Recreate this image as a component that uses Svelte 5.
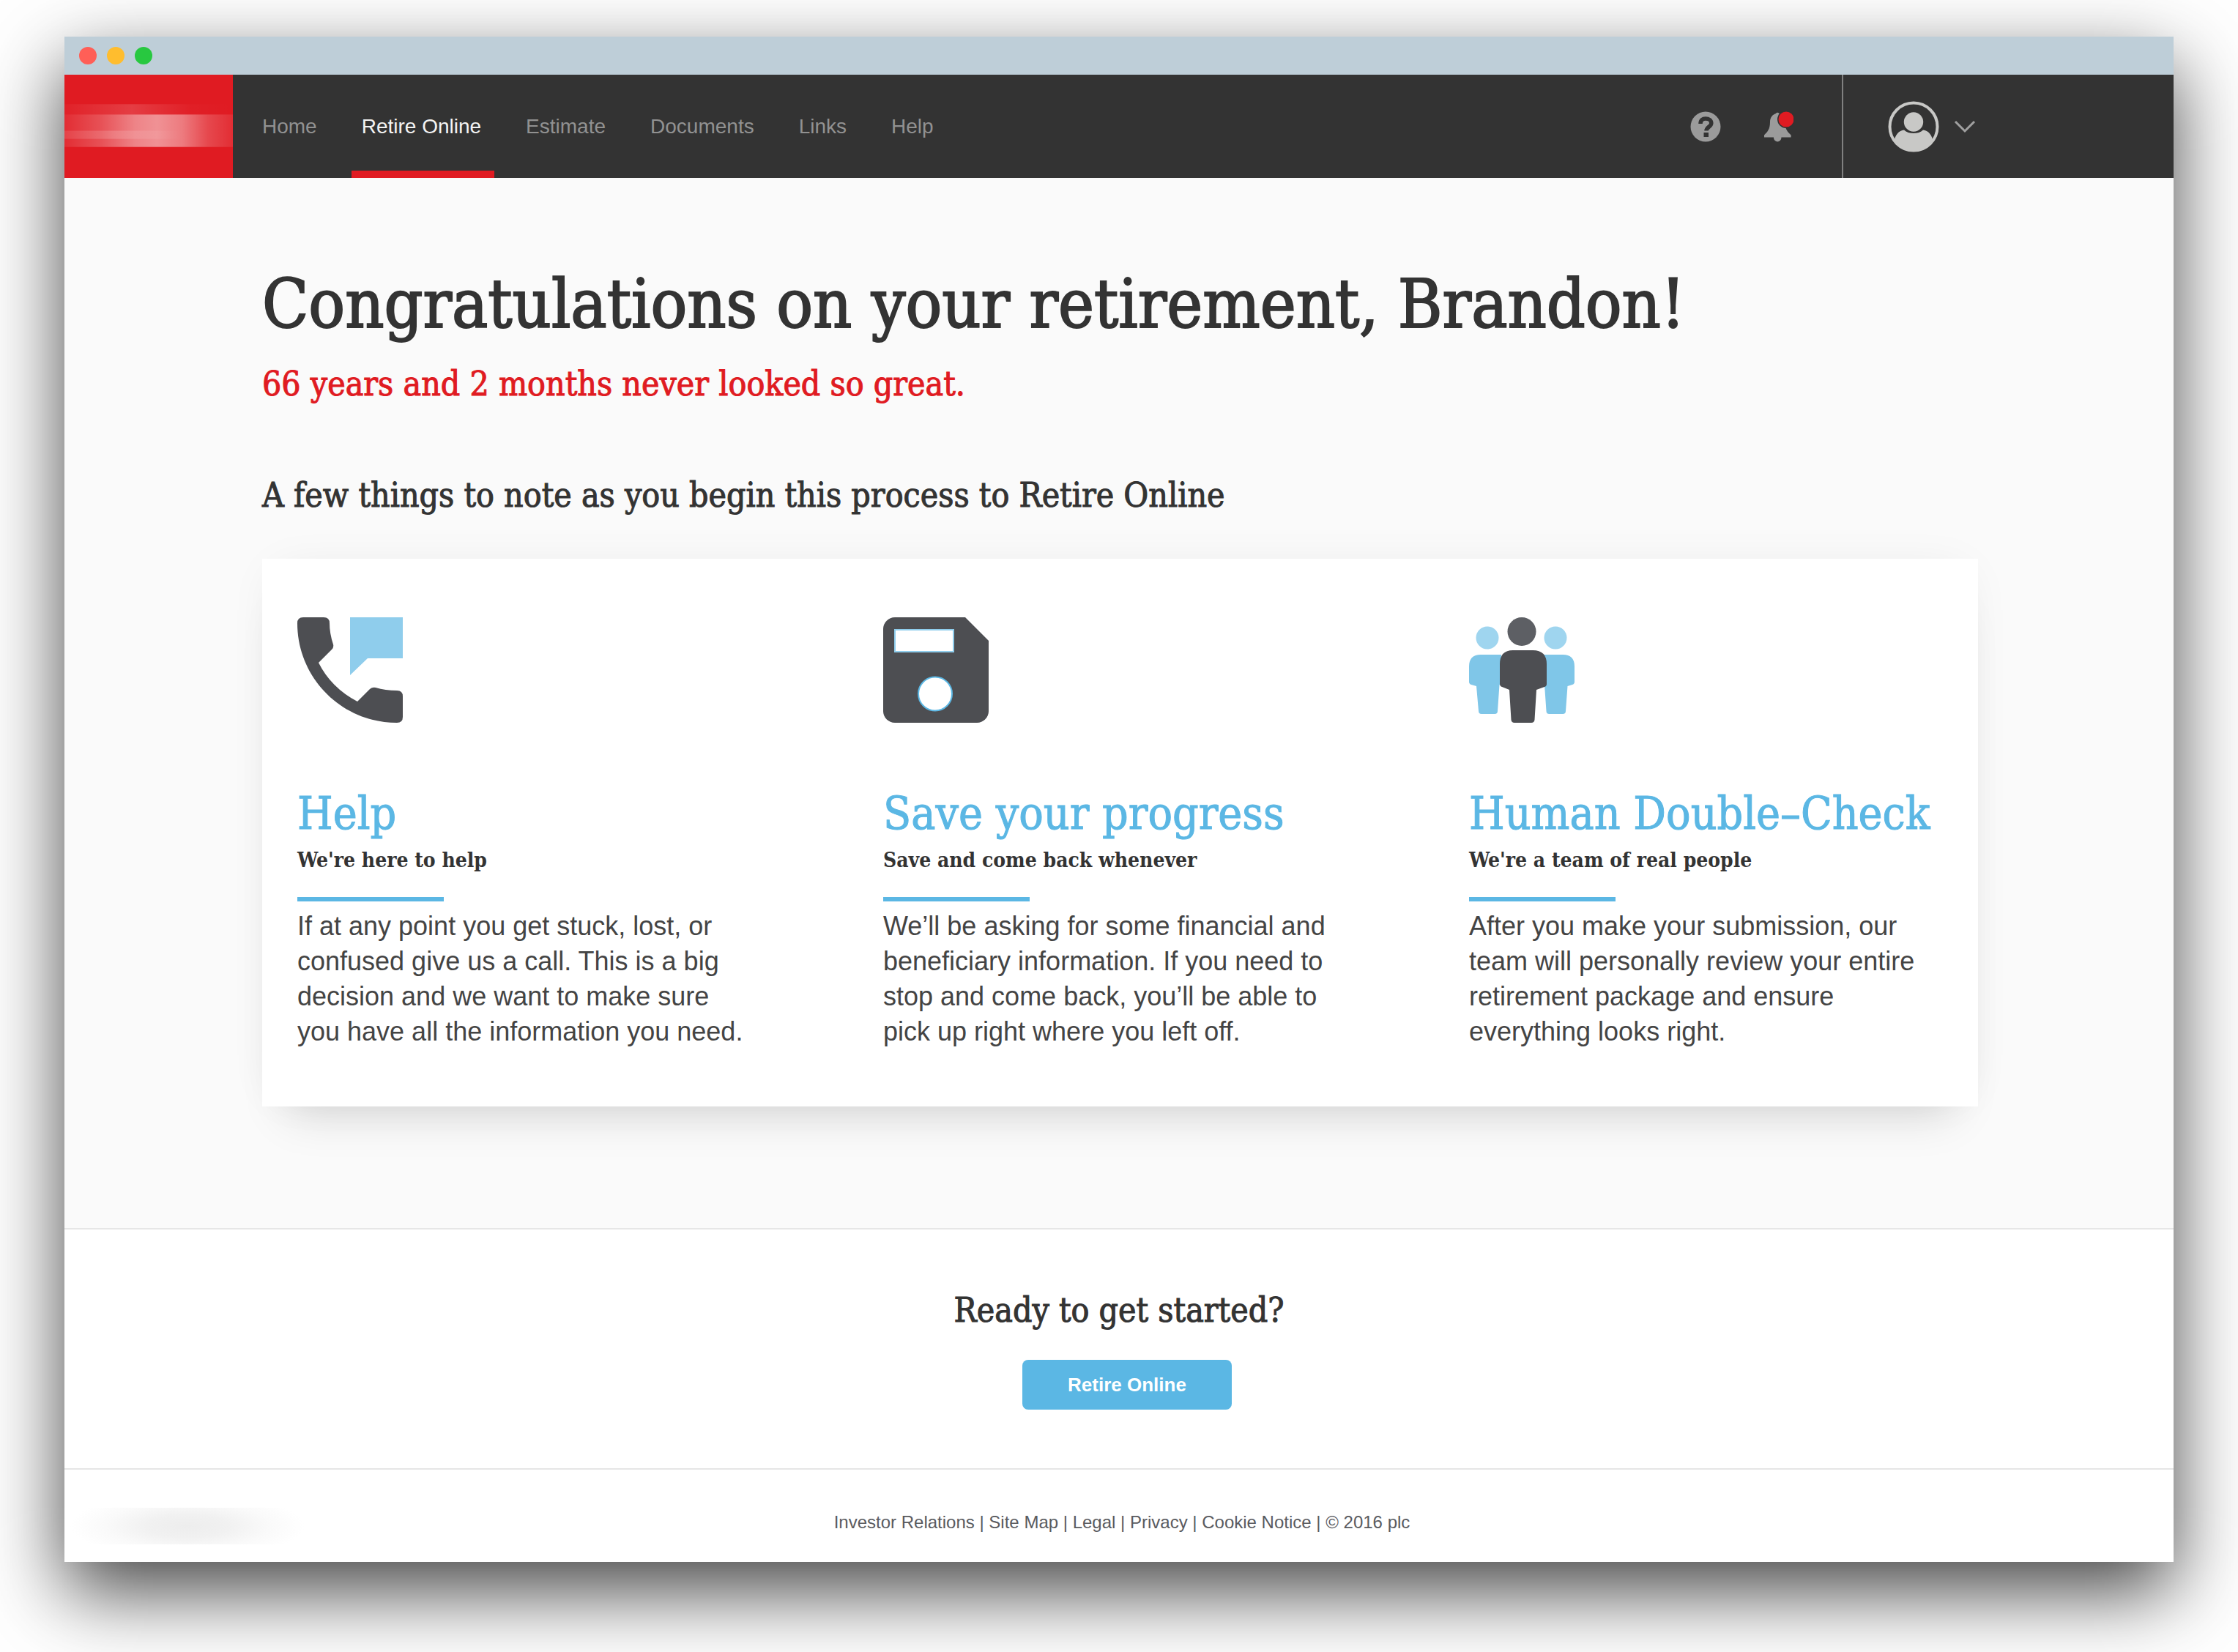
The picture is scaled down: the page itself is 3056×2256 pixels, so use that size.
<script>
  const nav = ['Home', 'Retire Online', 'Estimate', 'Documents', 'Links', 'Help'];
  const active = 'Retire Online';
  const cards = [
    {
      icon: 'phone',
      title: 'Help',
      sub: "We're here to help",
      text: 'If at any point you get stuck, lost, or confused give us a call. This is a big decision and we want to make sure you have all the information you need.'
    },
    {
      icon: 'save',
      title: 'Save your progress',
      sub: 'Save and come back whenever',
      text: 'We’ll be asking for some financial and beneficiary information. If you need to stop and come back, you’ll be able to pick up right where you left off.'
    },
    {
      icon: 'people',
      title: 'Human Double–Check',
      sub: "We're a team of real people",
      text: 'After you make your submission, our team will personally review your entire retirement package and ensure everything looks right.'
    }
  ];
  const links = ['Investor Relations', 'Site Map', 'Legal', 'Privacy', 'Cookie Notice'];
</script>

<div class="window">
  <div class="titlebar">
    <span class="light close"></span>
    <span class="light minimize"></span>
    <span class="light expand"></span>
  </div>

  <header>
    <a class="brand" href="#home" aria-label="Home page">
      <svg viewBox="0 0 230 140" preserveAspectRatio="none" aria-hidden="true">
        <defs>
          <linearGradient id="band">
            <stop offset="0" stop-color="#fff" stop-opacity="0.08" />
            <stop offset="0.22" stop-color="#fff" stop-opacity="0.24" />
            <stop offset="0.42" stop-color="#fff" stop-opacity="0.46" />
            <stop offset="0.55" stop-color="#fff" stop-opacity="0.52" />
            <stop offset="0.7" stop-color="#fff" stop-opacity="0.42" />
            <stop offset="0.85" stop-color="#fff" stop-opacity="0.2" />
            <stop offset="1" stop-color="#fff" stop-opacity="0.08" />
          </linearGradient>
          <linearGradient id="haze">
            <stop offset="0" stop-color="#fff" stop-opacity="0.03" />
            <stop offset="0.4" stop-color="#fff" stop-opacity="0.15" />
            <stop offset="0.75" stop-color="#fff" stop-opacity="0.02" />
            <stop offset="1" stop-color="#fff" stop-opacity="0" />
          </linearGradient>
          <linearGradient id="streak">
            <stop offset="0" stop-color="#fff" stop-opacity="0.1" />
            <stop offset="0.3" stop-color="#fff" stop-opacity="0.16" />
            <stop offset="0.7" stop-color="#fff" stop-opacity="0" />
          </linearGradient>
        </defs>
        <rect y="40" width="230" height="14" fill="url(#haze)" />
        <rect y="54" width="230" height="44" fill="url(#band)" />
        <rect y="76" width="230" height="11" fill="url(#streak)" />
      </svg>
    </a>
    <nav>
      {#each nav as item}
        <a href="#{item.toLowerCase().replace(' ', '-')}" class:active={item === active}>{item}</a>
      {/each}
    </nav>
    <div class="tools">
      <button class="icon" aria-label="Support">
        <svg width="42" height="42" viewBox="0 0 42 42" aria-hidden="true">
          <circle cx="21" cy="21" r="20.5" fill="#9b9b9b" />
          <path d="M14 17C14 12 17 10 21 10c4.500 0 7.800 2.300 7.800 6.200 0 4.800-6.800 5.300-6.800 10.300" fill="none" stroke="#333" stroke-width="5.500" />
          <rect x="18.500" y="29" width="6.500" height="6" fill="#333" />
        </svg>
      </button>
      <button class="icon" aria-label="Notifications">
        <svg width="42" height="42" viewBox="0 0 42 42" aria-hidden="true">
          <path d="M18 3a2.600 2.600 0 0 1 4.400 0c5 1.500 8 6 8 11.500 0 10 3.500 13.500 8.200 18V35.500H25.500a5.300 6 0 0 1-10.600 0H2V32.500c4.500-4.500 8-8 8-18 0-5.500 3-10 8-11.500z" fill="#9b9b9b" />
          <circle cx="32" cy="11" r="12" fill="#333" />
          <circle cx="32" cy="11" r="10.500" fill="#e01b22" />
        </svg>
      </button>
    </div>
    <button class="account" aria-label="Account menu">
      <svg width="70" height="70" viewBox="0 0 70 70" aria-hidden="true">
        <defs><clipPath id="face"><circle cx="35" cy="35" r="33" /></clipPath></defs>
        <circle cx="35" cy="35" r="32.500" fill="none" stroke="#c8c8c6" stroke-width="4" />
        <path clip-path="url(#face)" d="M8 70V56C10 46 15 40 22 39.500c3 3 8 4.500 13 4.500s10-1.500 13-4.500c7 .5 12 6.500 14 16.500V70z" fill="#c8c8c6" />
        <circle cx="35" cy="28.500" r="13.200" fill="#c8c8c6" />
      </svg>
      <svg width="30" height="18" viewBox="0 0 30 18" aria-hidden="true">
        <path d="M2 2l13 13L28 2" fill="none" stroke="#a0a0a0" stroke-width="3" />
      </svg>
    </button>
  </header>

  <main>
    <h1>Congratulations on your retirement, Brandon!</h1>
    <p class="age">66 years and 2 months never looked so great.</p>
    <h2>A few things to note as you begin this process to Retire Online</h2>

    <div class="cards">
      {#each cards as card}
        <section>
          <svg class="pic" viewBox="0 0 144 144" aria-hidden="true">
            {#if card.icon === 'phone'}
              <path d="M72 0H144V56H96L72 79z" fill="#8fcdec" />
              <path d="M8 0H36Q44 0 44 8 44 22 49 37 50 41 47 44L29 62Q46 96 82 115L99 98Q102 95 107 96 120 100 136 100 144 100 144 108V136Q144 144 136 144C61 144 0 83 0 8Q0 0 8 0z" fill="#4d4e52" />
            {:else if card.icon === 'save'}
              <path d="M16 0H112L144 32V128A16 16 0 0 1 128 144H16A16 16 0 0 1 0 128V16A16 16 0 0 1 16 0z" fill="#4d4e52" />
              <rect x="16" y="17" width="80" height="30" fill="#fff" stroke="#8fcdec" stroke-width="2" />
              <circle cx="71" cy="104.500" r="23" fill="#fff" stroke="#5bb7e4" stroke-width="2" />
            {:else}
              <g fill="#7fc6e8">
                <path d="M16 51H44V92L41.500 92 39 128Q39 132 35 132H17Q13 132 13 128L10 94 3 92Q0 91 0 88V67Q0 51 16 51z" />
                <path d="M128 51H100V92L103 92 105.500 128Q105.500 132 109.500 132H128Q132 132 132 128L134.500 94 141 92Q144 91 144 88V67Q144 51 128 51z" />
              </g>
              <circle cx="25" cy="28" r="15.500" fill="#9fd5ef" />
              <circle cx="118" cy="28" r="15.500" fill="#9fd5ef" />
              <circle cx="72" cy="19.500" r="19.500" fill="#5d5f64" />
              <path d="M60 45H87Q106 45 106 64V91Q106 94 103 95L92 99 89.500 140Q89 144 85 144H62Q58 144 57.500 140L55 99 45 95Q42 94 42 91V64Q42 45 60 45z" fill="#4d4e52" />
            {/if}
          </svg>
          <h3>{card.title}</h3>
          <h4>{card.sub}</h4>
          <p>{card.text}</p>
        </section>
      {/each}
    </div>
  </main>

  <div class="cta">
    <h2>Ready to get started?</h2>
    <button class="primary">Retire Online</button>
  </div>

  <footer>
    <span class="mark"></span>
    <div class="links">
      {#each links as link}<a href="#{link.toLowerCase().replace(' ', '-')}">{link}</a>{' | '}{/each}© 2016 plc
    </div>
  </footer>
</div>

<style>
  :global(body) {
    background: #fff;
  }
  .window {
    margin: 50px 88px 124px;
    background: #fff;
    color: #333;
    font-family: 'Liberation Sans', Arial, sans-serif;
    box-shadow: 0 40px 100px rgba(0, 0, 0, 0.73);
  }
  h1,
  h2,
  h3,
  h4,
  p {
    margin: 0;
  }
  h1,
  h2,
  h3,
  h4,
  .age {
    font-family: 'DejaVu Serif Condensed', 'DejaVu Serif', serif;
    font-weight: 400;
  }
  h2,
  h3,
  .age {
    -webkit-text-stroke: 1px currentColor;
  }
  .titlebar {
    display: flex;
    align-items: center;
    gap: 14px;
    height: 52px;
    padding: 0 20px;
    background: #beced8;
  }
  .light {
    width: 24px;
    height: 24px;
    border-radius: 50%;
  }
  .close {
    background: #ff5f57;
  }
  .minimize {
    background: #ffbd2e;
  }
  .expand {
    background: #28c840;
  }
  header {
    display: flex;
    height: 141px;
    background: #333;
  }
  .brand {
    width: 230px;
    background: #e01b22;
  }
  .brand svg {
    display: block;
    width: 100%;
    height: 100%;
  }
  nav {
    display: flex;
    gap: 29px;
    padding-left: 26px;
  }
  nav a {
    box-sizing: border-box;
    padding: 0 18px 0 14px;
    border-bottom: 10px solid transparent;
    color: #919191;
    font-size: 28px;
    line-height: 142px;
    height: 141px;
    text-decoration: none;
  }
  nav a.active {
    border-color: #e01b22;
    color: #f4f4f4;
  }
  button {
    border: 0;
    background: none;
    font-family: inherit;
  }
  .tools {
    display: flex;
    gap: 57px;
    margin-left: auto;
    padding-right: 66px;
    border-right: 2px solid #808080;
  }
  .icon {
    padding: 0;
    display: flex;
    align-items: center;
  }
  .account {
    display: flex;
    align-items: center;
    gap: 20px;
    width: 451px;
    padding: 0 0 0 61px;
  }
  main {
    padding: 115px 267px 166px 270px;
    background: #fafafa;
    border-bottom: 2px solid #e6e6e6;
  }
  h1 {
    font-size: 92px;
    line-height: 116px;
    -webkit-text-stroke: 2px currentColor;
  }
  .age {
    color: #e01b22;
    font-size: 46px;
    line-height: 60px;
    margin-top: 20px;
  }
  h2 {
    font-size: 46px;
    line-height: 60px;
  }
  main h2 {
    margin-top: 92px;
  }
  .cards {
    display: grid;
    grid-template-columns: repeat(3, 1fr);
    gap: 153px;
    margin-top: 57px;
    padding: 80px 48px 78px;
    background: #fff;
    box-shadow:
      0 44px 60px -34px rgba(0, 0, 0, 0.14),
      0 0 60px -22px rgba(0, 0, 0, 0.1);
  }
  .pic {
    display: block;
    width: 144px;
    height: 144px;
  }
  h3 {
    margin-top: 88px;
    color: #5bb7e4;
    font-size: 62px;
    line-height: 72px;
    white-space: nowrap;
  }
  h4 {
    font-size: 28px;
    font-weight: 700;
    line-height: 56px;
    white-space: nowrap;
  }
  h4::after {
    content: '';
    display: block;
    width: 200px;
    height: 6px;
    margin-top: 22px;
    background: #5bb7e4;
  }
  section p {
    max-width: 620px;
    margin-top: 10px;
    color: #444;
    font-size: 36px;
    line-height: 48px;
  }
  .cta {
    display: flex;
    flex-direction: column;
    align-items: center;
    padding: 80px 0;
    border-bottom: 2px solid #e6e6e6;
  }
  .primary {
    margin: 38px 0 0 22px;
    padding: 0 62px;
    border-radius: 8px;
    background: #5bb7e4;
    color: #fff;
    font-size: 26px;
    font-weight: 700;
    line-height: 68px;
  }
  footer {
    display: grid;
    grid-template-columns: 1fr auto 1fr;
    align-items: center;
    height: 126px;
    padding-left: 8px;
  }
  .mark {
    width: 320px;
    height: 50px;
    margin-top: 28px;
    background: radial-gradient(50% 90% at 50% 50%, #ededed, #f1f1f1 35%, #fafafa 70%, #fff);
  }
  .links {
    color: #5a5b5f;
    font-size: 24px;
    line-height: 32px;
    padding-top: 18px;
  }
  .links a {
    color: inherit;
    text-decoration: none;
  }
</style>
